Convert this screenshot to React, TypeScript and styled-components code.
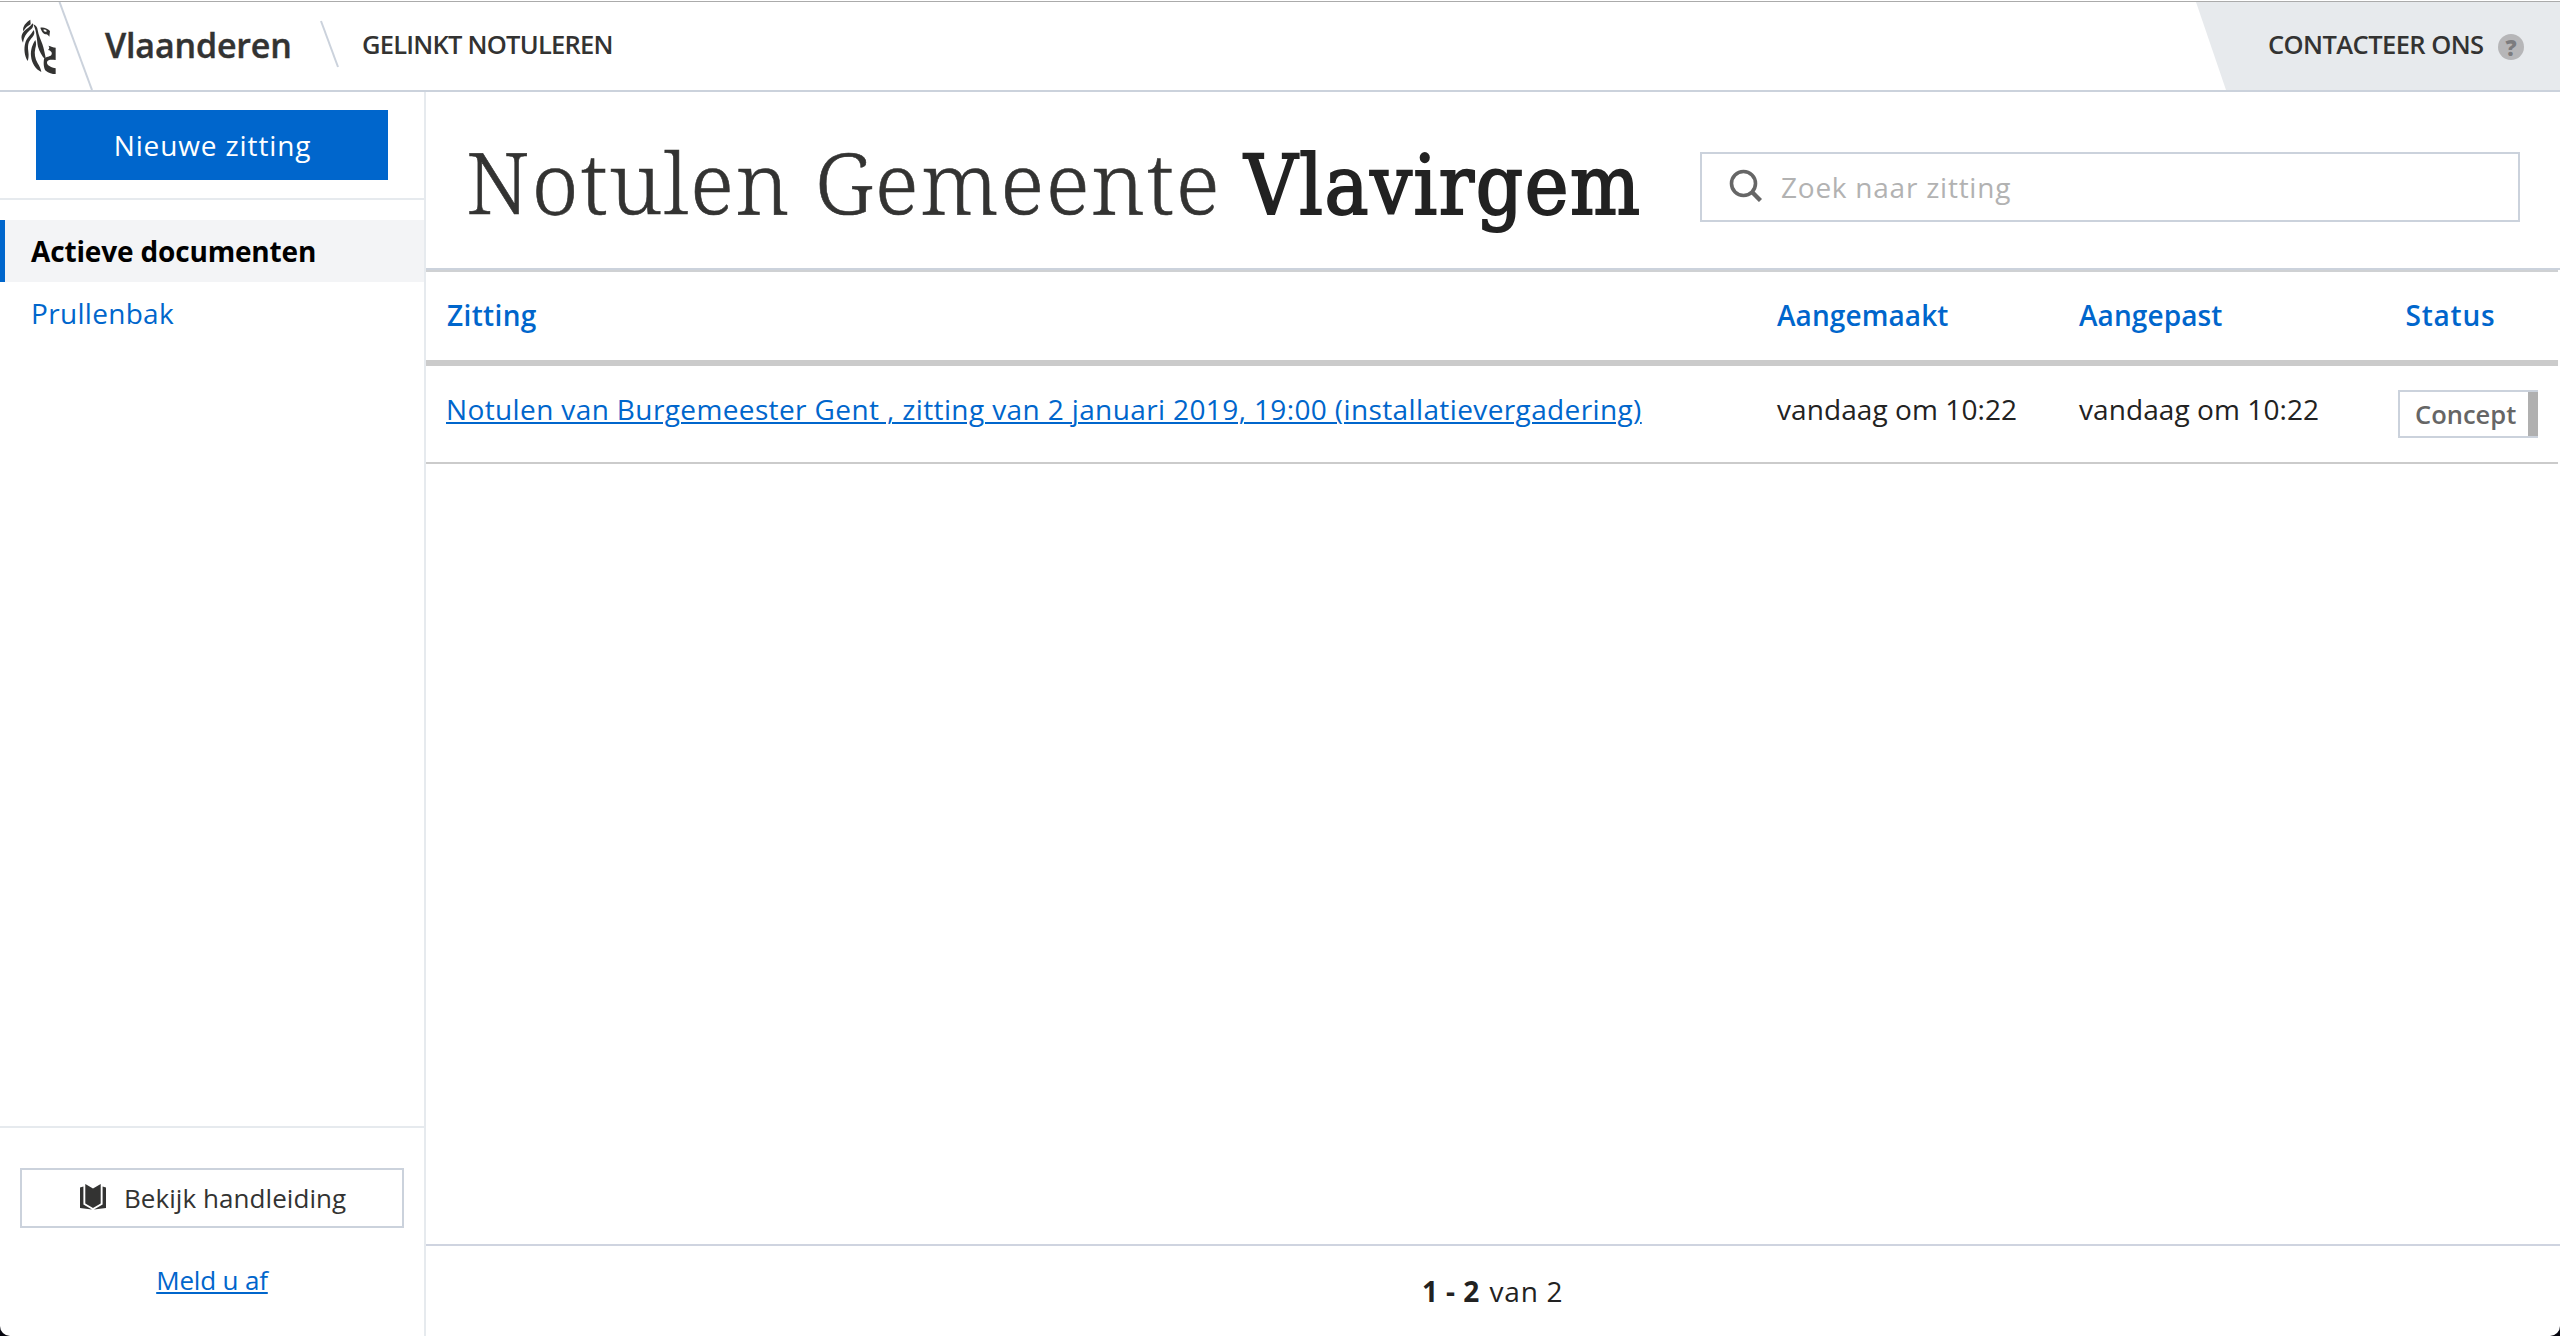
import React from "react";
import styled, { createGlobalStyle } from "styled-components";

const c = {
  blue: "#0066cc",
  text: "#333332",
  dark: "#222222",
  line: "#cbd2dc",
  soft: "#e6eaee",
  panel: "#e7eaed",
  grey: "#cbcbcb",
};

const GlobalStyle = createGlobalStyle`
  * { box-sizing: border-box; }
  html { background: #06060f; }
  body { margin: 0; font-family: "Open Sans", "Noto Sans", sans-serif; color: ${c.dark}; }
`;

const Page = styled.div`
  display: flex;
  flex-direction: column;
  height: 1336px;
  background: #fff;
  border-radius: 0 0 10px 10px;
  overflow: hidden;
`;

/* Header */
const Header = styled.header`
  display: flex;
  flex: none;
  height: 91px;
  margin-top: 1px;
  border-top: 1px solid #ababab;
  border-bottom: 2px solid ${c.line};
  color: ${c.text};
`;
const Lion = styled.svg`
  flex: none;
  width: 35px;
  height: 56px;
  margin: 17px 0 0 21px;
`;
const Slash = styled.svg`
  flex: none;
  display: block;
  margin-left: 2px;
`;
const Brand = styled.div`
  width: 227px;
  padding-left: 12px;
  font-size: 34px;
  font-weight: 600;
  line-height: 86px;
  letter-spacing: -0.16px;
  -webkit-text-stroke: 0.4px ${c.text};
`;
const Divider = styled.svg`
  flex: none;
  margin-top: 18px;
`;
const ProductName = styled.div`
  padding-left: 22px;
  font-size: 25.5px;
  font-weight: 600;
  line-height: 85px;
  letter-spacing: -0.76px;
`;
const Contact = styled.a`
  display: flex;
  align-items: center;
  justify-content: space-between;
  width: 364px;
  margin-left: auto;
  padding: 0 36px 4px 72px;
  background: ${c.panel};
  clip-path: polygon(0 0, 100% 0, 100% 100%, 30px 100%);
  font-size: 25.5px;
  font-weight: 600;
  line-height: 84px;
  letter-spacing: -0.57px;
`;
const Help = styled.span`
  width: 26px;
  height: 26px;
  margin-top: 6px;
  border-radius: 50%;
  background: #b6b6b8;
  color: #7c7c7e;
  font-size: 22px;
  font-weight: 800;
  line-height: 26px;
  letter-spacing: 0;
  text-align: center;
`;

/* Body */
const Body = styled.div`
  display: flex;
  flex: 1;
  min-height: 0;
`;
const Sidebar = styled.aside`
  display: flex;
  flex-direction: column;
  width: 426px;
  border-right: 2px solid ${c.soft};
`;
const SidebarTop = styled.div`
  height: 108px;
  padding: 18px 36px;
  border-bottom: 2px solid ${c.soft};
`;
const PrimaryButton = styled.button`
  display: block;
  width: 352px;
  height: 70px;
  padding: 0 0 0 1px;
  border: 0;
  background: ${c.blue};
  color: #fff;
  font: 400 28px/70px "Open Sans", "Noto Sans", sans-serif;
  letter-spacing: 0.88px;
`;
const Nav = styled.nav`
  flex: 1;
  padding-top: 20px;
`;
const NavItem = styled.a<{ $active?: boolean }>`
  display: block;
  height: 62px;
  padding-left: ${(p) => (p.$active ? 26 : 31)}px;
  border-left: ${(p) => (p.$active ? `5px solid ${c.blue}` : "0")};
  background: ${(p) => (p.$active ? "#f3f4f6" : "transparent")};
  color: ${(p) => (p.$active ? "#000" : c.blue)};
  font-size: 28px;
  font-weight: ${(p) => (p.$active ? 700 : 400)};
  line-height: 62px;
  letter-spacing: ${(p) => (p.$active ? -0.16 : 0.31)}px;
`;
const SidebarBottom = styled.div`
  display: flex;
  flex-direction: column;
  height: 210px;
  padding: 40px 20px 0;
  border-top: 2px solid ${c.soft};
`;
const OutlineButton = styled.button`
  display: flex;
  align-items: center;
  height: 60px;
  padding: 0 0 0 58px;
  border: 2px solid ${c.line};
  background: #fff;
  color: ${c.text};
  font: 400 26px/56px "Open Sans", "Noto Sans", sans-serif;
  letter-spacing: 0.06px;
  gap: 18px;
`;
const BookIcon = styled.svg`
  flex: none;
  margin-top: -2px;
`;
const Logout = styled.a`
  align-self: center;
  margin-top: 32px;
  color: ${c.blue};
  font-size: 26px;
  line-height: 40px;
  letter-spacing: -0.17px;
  text-decoration: underline 2px;
  text-underline-offset: 2px;
`;

/* Main */
const Main = styled.main`
  display: flex;
  flex: 1;
  flex-direction: column;
`;
const TitleBar = styled.div`
  display: flex;
  justify-content: space-between;
  height: 178px;
  padding: 0 40px 0 40px;
  border-bottom: 2px solid ${c.line};
`;
const Title = styled.h1`
  margin: 0;
  color: ${c.text};
  font: 300 85px/178px "Noto Serif", "DejaVu Serif Condensed", serif;
  letter-spacing: 1.8px;
  white-space: pre;
  -webkit-text-stroke: 0.6px ${c.text};
`;
const TitleName = styled.strong`
  margin-left: -1px;
  color: ${c.dark};
  font-family: "DejaVu Serif Condensed", "DejaVu Serif", serif;
  font-stretch: condensed;
  font-weight: 400;
  font-size: 82px;
  line-height: 1;
  letter-spacing: 1.7px;
  -webkit-text-stroke: 2px ${c.dark};
`;
const Search = styled.label`
  display: flex;
  width: 820px;
  height: 70px;
  margin-top: 60px;
  padding-left: 27px;
  border: 2px solid ${c.line};
  color: #b2b2b2;
  font-size: 28px;
  line-height: 66px;
  letter-spacing: 0.76px;
`;
const SearchIcon = styled.svg`
  flex: none;
  margin: 15px 19px 0 0;
`;
const Table = styled.div`
  width: 2132px;
`;
const HeadRow = styled.div`
  display: grid;
  grid-template-columns: 1351px 302px 326.5px 1fr;
  height: 96px;
  border-top: 2px solid #cfd1d3;
  border-bottom: 6px solid ${c.grey};
`;
const HeadCell = styled.div<{ $pad?: number; $ls?: number }>`
  padding-left: ${(p) => p.$pad ?? 0}px;
  color: ${c.blue};
  font-size: 28px;
  font-weight: 600;
  line-height: 86px;
  letter-spacing: ${(p) => p.$ls ?? 0.1}px;
`;
const Row = styled.div`
  display: grid;
  grid-template-columns: 1351px 302px 319px 1fr;
  height: 98px;
  border-bottom: 2px solid ${c.grey};
  font-size: 28px;
  line-height: 86px;
`;
const Cell = styled.div`
  letter-spacing: 0.08px;
`;
const DocLink = styled.a`
  margin-left: 20px;
  color: ${c.blue};
  letter-spacing: 0.38px;
  text-decoration: underline 2px;
  text-underline-offset: 2px;
`;
const Badge = styled.span`
  width: 140px;
  height: 48px;
  margin-top: 24px;
  padding-left: 15px;
  border: 2px solid ${c.line};
  border-right: 0;
  background: linear-gradient(#b0b0b0, #b0b0b0) right / 10px 100% no-repeat border-box;
  box-shadow: inset -10px 0 #b0b0b0;
  color: #666;
  font-size: 25.5px;
  font-weight: 600;
  line-height: 45px;
`;
const Footer = styled.footer`
  margin-top: auto;
  height: 92px;
  border-top: 2px solid #cfd4e0;
  padding-left: 996px;
  font-size: 28px;
  line-height: 90px;
  letter-spacing: 0.75px;
`;
const Range = styled.strong`
  margin-right: 2px;
  letter-spacing: 0.4px;
`;

export default function App() {
  return (
    <>
      <GlobalStyle />
      <Page>
        <Header>
          <Lion viewBox="64 57 105 168" fill={c.text}>
            <path d="M92 59 L93 73 C85 77 78 83 71 94 C67 80 79 67 92 59Z" />
            <path d="M99 70 C102 76 100 83 94 88 C84 97 74 105 70 128 C63 116 64 104 73 94 C82 86 92 80 99 70Z" />
            <path d="M102 90 C106 98 104 105 98 112 C88 123 83 131 86 155 C88 168 86 177 84 183 C74 166 72 146 77 128 C81 114 95 103 102 90Z" />
            <path d="M107 120 C111 130 109 138 107 145 C103 161 106 176 114 190 C119 198 124 207 125 216 C108 208 96 190 94 168 C92 149 99 132 107 120Z" />
            <path d="M101 73 C109 76 113 82 114 90 C116 104 123 118 128 132 C133 146 135 160 138 173 L136 178 C127 168 119 154 115 140 C111 120 112 96 101 73Z" />
            <path d="M122 83 C132 81 143 85 151 93 L149 110 C146 106 143 104 140 103 C132 103 127 97 122 83Z M131 89 C133 95 138 97 142 94 C140 90 136 88 131 89Z" fillRule="evenodd" />
            <path d="M146 137 C154 139 161 142 168 143 L168 180 C156 179 149 177 143 184 C139 191 146 201 168 205 L168 222 C157 222 147 219 138 212 C132 205 131 190 133 177 C140 169 150 171 155 165 C159 160 155 152 145 150 C150 146 150 141 146 137Z" />
          </Lion>
          <Slash width="35" height="88" fill="none">
            <path d="M1.5 0 L34 88" stroke={c.line} strokeWidth="2" />
          </Slash>
          <Brand>Vlaanderen</Brand>
          <Divider width="20" height="48" fill="none">
            <path d="M1 1 L18 47" stroke={c.line} strokeWidth="2" />
          </Divider>
          <ProductName>GELINKT NOTULEREN</ProductName>
          <Contact>
            CONTACTEER ONS
            <Help>?</Help>
          </Contact>
        </Header>
        <Body>
          <Sidebar>
            <SidebarTop>
              <PrimaryButton>Nieuwe zitting</PrimaryButton>
            </SidebarTop>
            <Nav>
              <NavItem $active>Actieve documenten</NavItem>
              <NavItem>Prullenbak</NavItem>
            </Nav>
            <SidebarBottom>
              <OutlineButton>
                <BookIcon width="26" height="26" viewBox="0 0 26 26" fill={c.text}>
                  <path d="M5.3 0 L13 4.6 L20.7 0 V19.6 L13 24 L5.3 19.6Z" />
                  <path d="M0 3.6 L3.4 2.6 V20.6 L12 25.6 L0 24Z M26 3.6 L22.6 2.6 V20.6 L14 25.6 L26 24Z" />
                </BookIcon>
                Bekijk handleiding
              </OutlineButton>
              <Logout>Meld u af</Logout>
            </SidebarBottom>
          </Sidebar>
          <Main>
            <TitleBar>
              <Title>
                Notulen Gemeente <TitleName>Vlavirgem</TitleName>
              </Title>
              <Search>
                <SearchIcon width="33" height="33" fill="none" stroke="#666" strokeWidth="3.6">
                  <circle cx="14.5" cy="14.5" r="12" />
                  <path d="M23 23 L31.5 31.5" strokeWidth="4.4" />
                </SearchIcon>
                Zoek naar zitting
              </Search>
            </TitleBar>
            <Table>
              <HeadRow>
                <HeadCell $pad={21} $ls={0.35}>Zitting</HeadCell>
                <HeadCell>Aangemaakt</HeadCell>
                <HeadCell>Aangepast</HeadCell>
                <HeadCell $ls={0.8}>Status</HeadCell>
              </HeadRow>
              <Row>
                <Cell>
                  <DocLink>
                    Notulen van Burgemeester Gent , zitting van 2 januari 2019, 19:00 (installatievergadering)
                  </DocLink>
                </Cell>
                <Cell>vandaag om 10:22</Cell>
                <Cell>vandaag om 10:22</Cell>
                <Badge>Concept</Badge>
              </Row>
            </Table>
            <Footer>
              <Range>1 - 2</Range> van 2
            </Footer>
          </Main>
        </Body>
      </Page>
    </>
  );
}
